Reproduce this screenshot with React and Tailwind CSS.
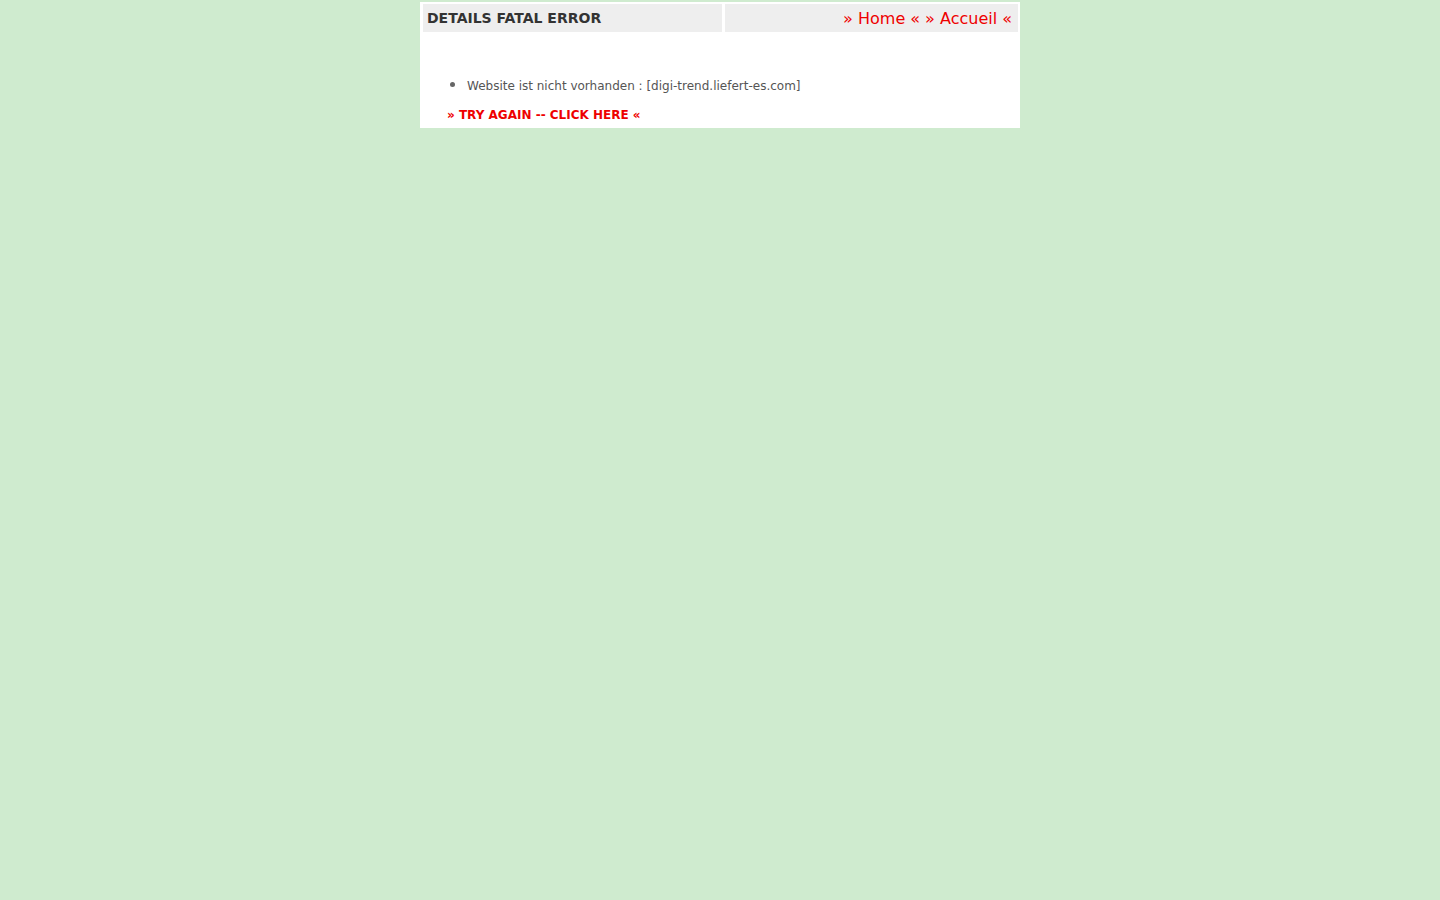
export default function App() {
  return (
    <div className="min-h-[900px] w-full bg-[#cfebcf] pt-[2px]" style={{ fontFamily: '"DejaVu Sans", Verdana, sans-serif' }}>
      <div className="mx-auto w-[600px] bg-white pt-[2px] pb-[2px] pl-[3px] pr-[2px]">
        <div className="flex gap-[3px]">
          <div className="flex h-[28px] w-[299px] items-center bg-[#eeeeee] pl-[4px] text-[14px] font-bold text-[#333333]">
            DETAILS FATAL ERROR
          </div>
          <div className="flex h-[28px] flex-1 items-center justify-end bg-[#eeeeee] pr-[6px] pt-[2px] text-[16px] text-[#ee0000]">
            <span>» Home «</span>
            <span className="ml-[5px]">» Accueil «</span>
          </div>
        </div>
        <div className="h-[94px] pl-[24px] pt-[41px]">
          <ul className="list-disc pl-[20px] text-[12px] text-[#555555] marker:text-[16px] marker:text-[#666666]">
            <li>Website ist nicht vorhanden : [digi-trend.liefert-es.com]</li>
          </ul>
          <div className="mt-[11px] text-[12px] font-bold text-[#ee0000]">» TRY AGAIN -- CLICK HERE «</div>
        </div>
      </div>
    </div>
  );
}
